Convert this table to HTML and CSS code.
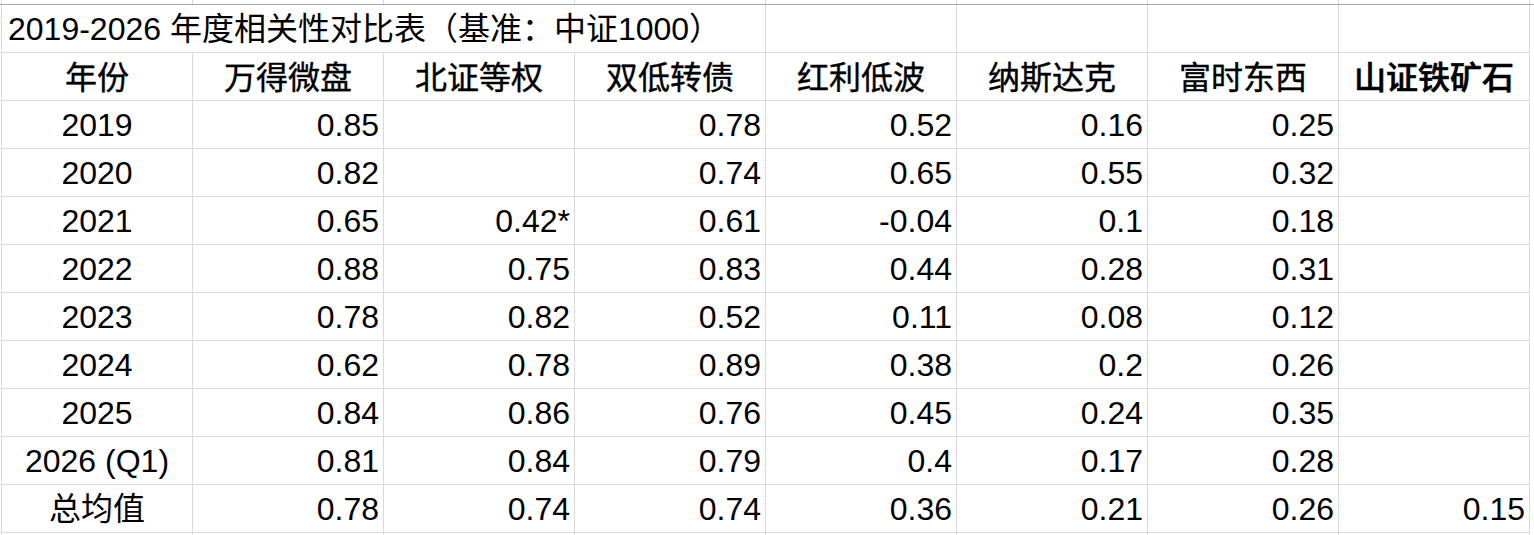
FILE: index.html
```html
<!DOCTYPE html>
<html lang="zh-CN">
<head>
<meta charset="utf-8">
<title>2019-2026 年度相关性对比表</title>
<link rel="stylesheet" href="styles.css">
</head>
<body>
<div class="page">
  <div class="strip strip-top">
    <div></div><div></div><div></div><div></div><div></div><div></div><div></div><div></div>
  </div>
  <div class="freeze-line"></div>
  <div class="sheet">
    <div class="cell title">2019-2026 年度相关性对比表（基准：中证1000）</div>
    <div class="cell"></div><div class="cell"></div><div class="cell"></div><div class="cell"></div>

    <div class="cell head">年份</div>
    <div class="cell head">万得微盘</div>
    <div class="cell head">北证等权</div>
    <div class="cell head">双低转债</div>
    <div class="cell head">红利低波</div>
    <div class="cell head">纳斯达克</div>
    <div class="cell head">富时东西</div>
    <div class="cell head strong">山证铁矿石</div>

    <div class="cell year">2019</div>
    <div class="cell num">0.85</div><div class="cell num"></div><div class="cell num">0.78</div><div class="cell num">0.52</div><div class="cell num">0.16</div><div class="cell num">0.25</div><div class="cell num"></div>

    <div class="cell year">2020</div>
    <div class="cell num">0.82</div><div class="cell num"></div><div class="cell num">0.74</div><div class="cell num">0.65</div><div class="cell num">0.55</div><div class="cell num">0.32</div><div class="cell num"></div>

    <div class="cell year">2021</div>
    <div class="cell num">0.65</div><div class="cell num">0.42*</div><div class="cell num">0.61</div><div class="cell num">-0.04</div><div class="cell num">0.1</div><div class="cell num">0.18</div><div class="cell num"></div>

    <div class="cell year">2022</div>
    <div class="cell num">0.88</div><div class="cell num">0.75</div><div class="cell num">0.83</div><div class="cell num">0.44</div><div class="cell num">0.28</div><div class="cell num">0.31</div><div class="cell num"></div>

    <div class="cell year">2023</div>
    <div class="cell num">0.78</div><div class="cell num">0.82</div><div class="cell num">0.52</div><div class="cell num">0.11</div><div class="cell num">0.08</div><div class="cell num">0.12</div><div class="cell num"></div>

    <div class="cell year">2024</div>
    <div class="cell num">0.62</div><div class="cell num">0.78</div><div class="cell num">0.89</div><div class="cell num">0.38</div><div class="cell num">0.2</div><div class="cell num">0.26</div><div class="cell num"></div>

    <div class="cell year">2025</div>
    <div class="cell num">0.84</div><div class="cell num">0.86</div><div class="cell num">0.76</div><div class="cell num">0.45</div><div class="cell num">0.24</div><div class="cell num">0.35</div><div class="cell num"></div>

    <div class="cell year">2026 (Q1)</div>
    <div class="cell num">0.81</div><div class="cell num">0.84</div><div class="cell num">0.79</div><div class="cell num">0.4</div><div class="cell num">0.17</div><div class="cell num">0.28</div><div class="cell num"></div>

    <div class="cell year">总均值</div>
    <div class="cell num">0.78</div><div class="cell num">0.74</div><div class="cell num">0.74</div><div class="cell num">0.36</div><div class="cell num">0.21</div><div class="cell num">0.26</div><div class="cell num">0.15</div>
  </div>
  <div class="strip strip-bottom">
    <div></div><div></div><div></div><div></div><div></div><div></div><div></div><div></div>
  </div>
</div>
</body>
</html>
```

FILE: styles.css
```css
html, body {
  margin: 0;
  padding: 0;
  background: #ffffff;
}

body {
  width: 1534px;
  height: 535px;
  overflow: hidden;
  font-family: "Liberation Sans", "Noto Sans CJK SC", sans-serif;
  color: #000000;
}

.page {
  display: flex;
  flex-direction: column;
}

.strip {
  margin-left: 1px;
  width: 1527px;
  display: grid;
  grid-template-columns: repeat(8, 190px);
  column-gap: 1px;
  background: #dadada;
  border-left: 1px solid #dadada;
  border-right: 1px solid #dadada;
}

.strip div {
  background: #ffffff;
}

.strip-top {
  height: 4px;
}

.strip-bottom {
  height: 4px;
}

.freeze-line {
  height: 1px;
  background: #a6a6a6;
}

.sheet {
  margin-left: 1px;
  width: 1527px;
  display: grid;
  grid-template-columns: repeat(8, 190px);
  grid-auto-rows: 47px;
  gap: 1px;
  background: #dadada;
  border-left: 1px solid #dadada;
  border-right: 1px solid #dadada;
  border-bottom: 1px solid #dadada;
}

.cell {
  background: #ffffff;
  font-size: 32px;
  line-height: 48px;
  white-space: nowrap;
  overflow: hidden;
}

.title {
  grid-column: span 4;
  padding-left: 6px;
  font-weight: 400;
}

.head {
  text-align: center;
  font-weight: 400;
  line-height: 50px;
  -webkit-text-stroke: 0.4px #000000;
}

.head.strong {
  font-weight: 500;
  -webkit-text-stroke: 0.6px #000000;
}

.year {
  text-align: center;
}

.num {
  text-align: right;
  padding-right: 4px;
}
```
